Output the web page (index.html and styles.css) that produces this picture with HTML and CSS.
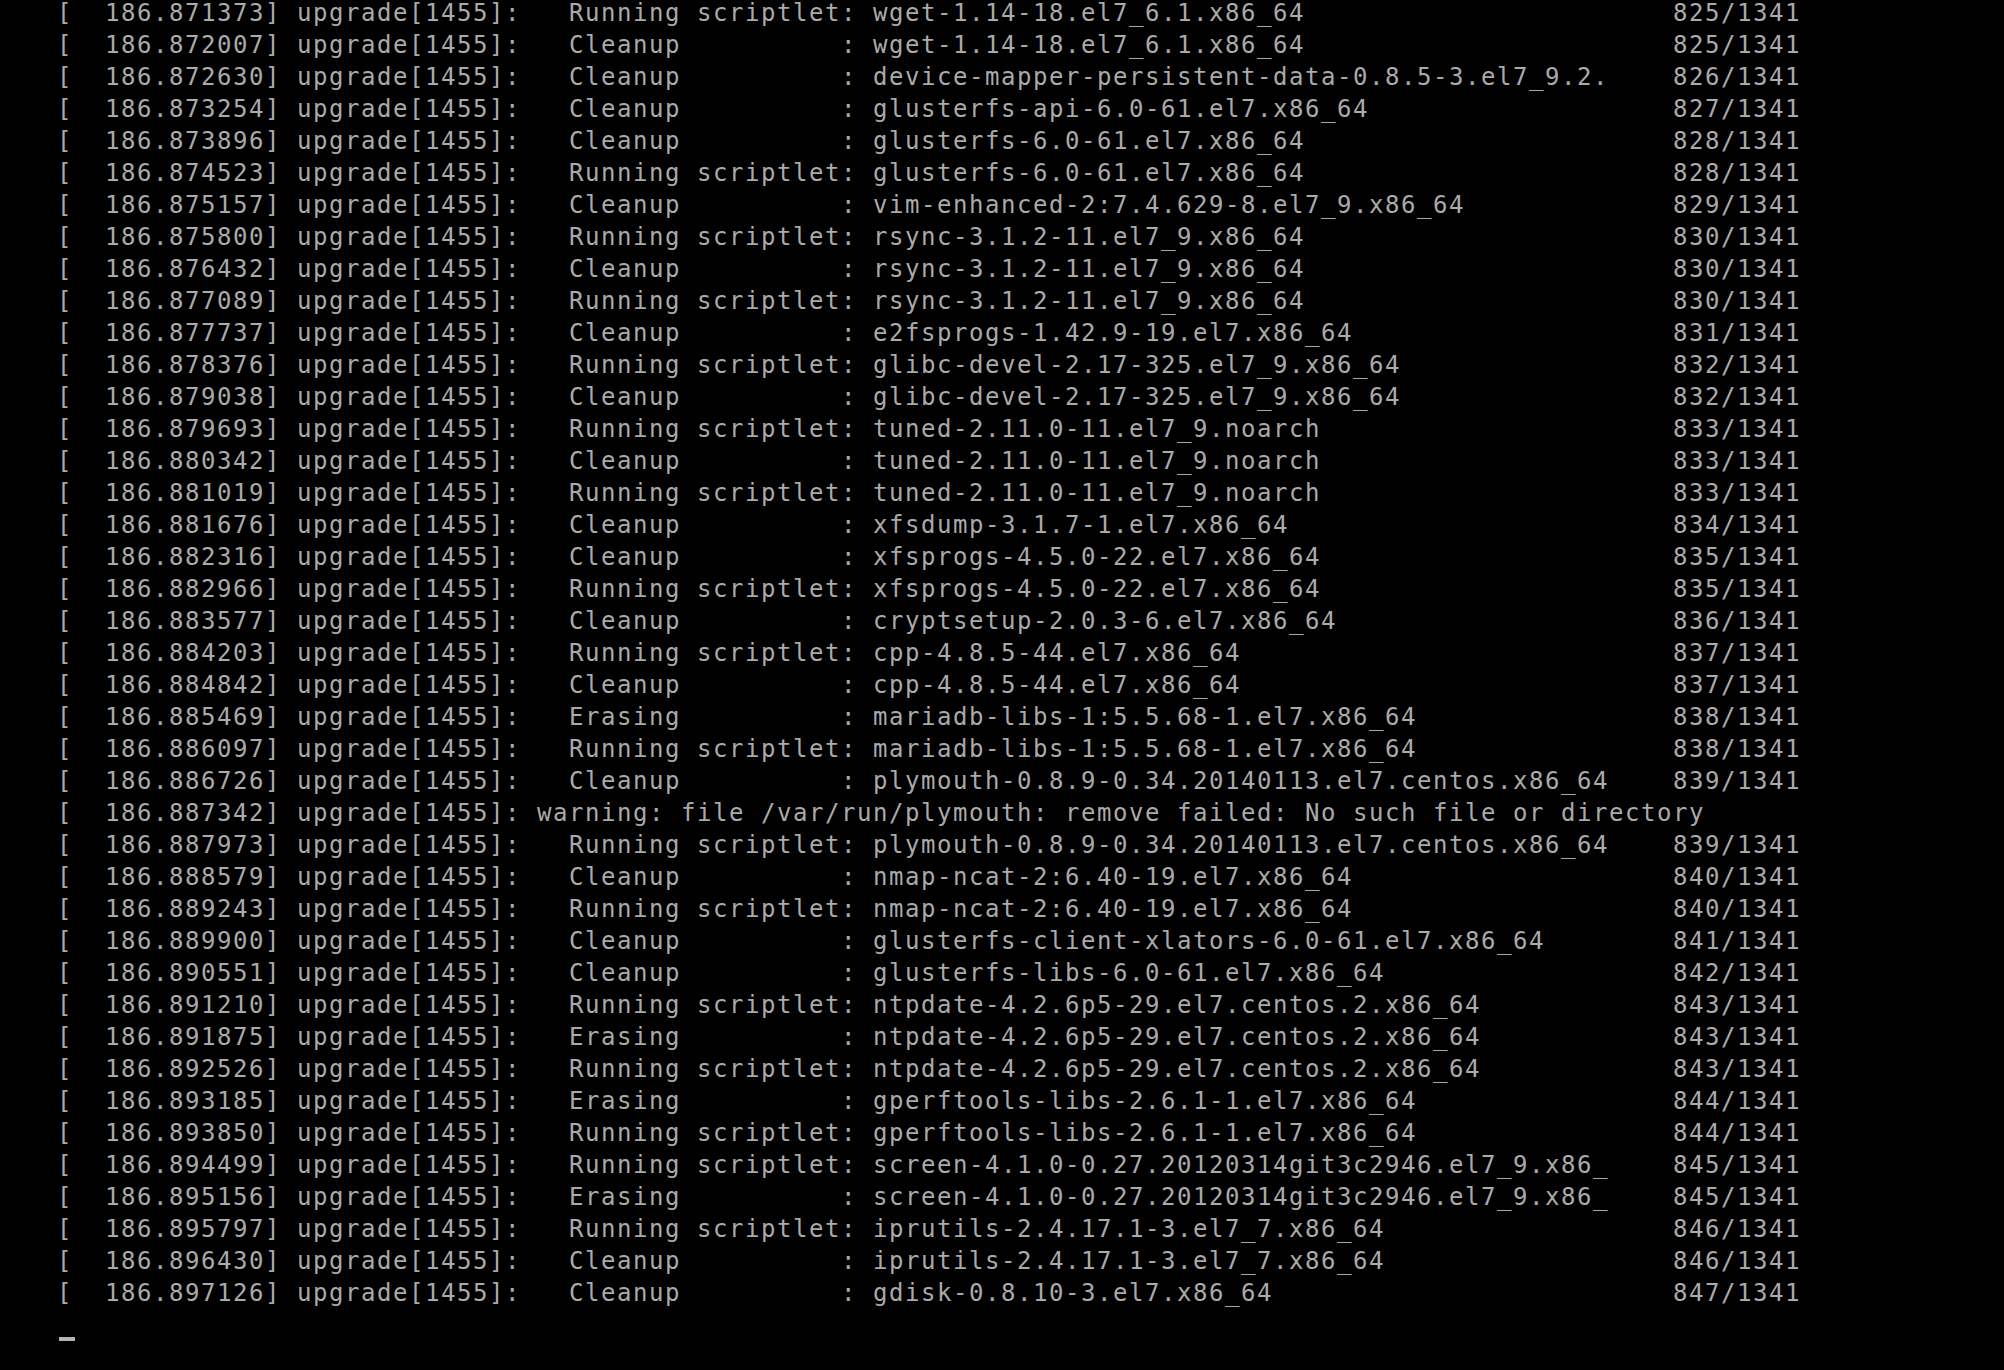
FILE: index.html
```html
<!DOCTYPE html>
<html lang="en">

<head>
    <meta charset="UTF-8">
    <meta name="viewport" content="width=device-width, initial-scale=1.0">
    <title>console</title>
    <link rel="stylesheet" href="styles.css">
</head>

<body>
    <div id="screen">
        <div class="ln"><span class="head">[  186.871373] upgrade[1455]:</span><span class="act">Running scriptlet:</span><span class="pkg">wget-1.14-18.el7_6.1.x86_64</span><span class="cnt">825/1341</span></div>
        <div class="ln"><span class="head">[  186.872007] upgrade[1455]:</span><span class="act">Cleanup          :</span><span class="pkg">wget-1.14-18.el7_6.1.x86_64</span><span class="cnt">825/1341</span></div>
        <div class="ln"><span class="head">[  186.872630] upgrade[1455]:</span><span class="act">Cleanup          :</span><span class="pkg">device-mapper-persistent-data-0.8.5-3.el7_9.2.</span><span class="cnt">826/1341</span></div>
        <div class="ln"><span class="head">[  186.873254] upgrade[1455]:</span><span class="act">Cleanup          :</span><span class="pkg">glusterfs-api-6.0-61.el7.x86_64</span><span class="cnt">827/1341</span></div>
        <div class="ln"><span class="head">[  186.873896] upgrade[1455]:</span><span class="act">Cleanup          :</span><span class="pkg">glusterfs-6.0-61.el7.x86_64</span><span class="cnt">828/1341</span></div>
        <div class="ln"><span class="head">[  186.874523] upgrade[1455]:</span><span class="act">Running scriptlet:</span><span class="pkg">glusterfs-6.0-61.el7.x86_64</span><span class="cnt">828/1341</span></div>
        <div class="ln"><span class="head">[  186.875157] upgrade[1455]:</span><span class="act">Cleanup          :</span><span class="pkg">vim-enhanced-2:7.4.629-8.el7_9.x86_64</span><span class="cnt">829/1341</span></div>
        <div class="ln"><span class="head">[  186.875800] upgrade[1455]:</span><span class="act">Running scriptlet:</span><span class="pkg">rsync-3.1.2-11.el7_9.x86_64</span><span class="cnt">830/1341</span></div>
        <div class="ln"><span class="head">[  186.876432] upgrade[1455]:</span><span class="act">Cleanup          :</span><span class="pkg">rsync-3.1.2-11.el7_9.x86_64</span><span class="cnt">830/1341</span></div>
        <div class="ln"><span class="head">[  186.877089] upgrade[1455]:</span><span class="act">Running scriptlet:</span><span class="pkg">rsync-3.1.2-11.el7_9.x86_64</span><span class="cnt">830/1341</span></div>
        <div class="ln"><span class="head">[  186.877737] upgrade[1455]:</span><span class="act">Cleanup          :</span><span class="pkg">e2fsprogs-1.42.9-19.el7.x86_64</span><span class="cnt">831/1341</span></div>
        <div class="ln"><span class="head">[  186.878376] upgrade[1455]:</span><span class="act">Running scriptlet:</span><span class="pkg">glibc-devel-2.17-325.el7_9.x86_64</span><span class="cnt">832/1341</span></div>
        <div class="ln"><span class="head">[  186.879038] upgrade[1455]:</span><span class="act">Cleanup          :</span><span class="pkg">glibc-devel-2.17-325.el7_9.x86_64</span><span class="cnt">832/1341</span></div>
        <div class="ln"><span class="head">[  186.879693] upgrade[1455]:</span><span class="act">Running scriptlet:</span><span class="pkg">tuned-2.11.0-11.el7_9.noarch</span><span class="cnt">833/1341</span></div>
        <div class="ln"><span class="head">[  186.880342] upgrade[1455]:</span><span class="act">Cleanup          :</span><span class="pkg">tuned-2.11.0-11.el7_9.noarch</span><span class="cnt">833/1341</span></div>
        <div class="ln"><span class="head">[  186.881019] upgrade[1455]:</span><span class="act">Running scriptlet:</span><span class="pkg">tuned-2.11.0-11.el7_9.noarch</span><span class="cnt">833/1341</span></div>
        <div class="ln"><span class="head">[  186.881676] upgrade[1455]:</span><span class="act">Cleanup          :</span><span class="pkg">xfsdump-3.1.7-1.el7.x86_64</span><span class="cnt">834/1341</span></div>
        <div class="ln"><span class="head">[  186.882316] upgrade[1455]:</span><span class="act">Cleanup          :</span><span class="pkg">xfsprogs-4.5.0-22.el7.x86_64</span><span class="cnt">835/1341</span></div>
        <div class="ln"><span class="head">[  186.882966] upgrade[1455]:</span><span class="act">Running scriptlet:</span><span class="pkg">xfsprogs-4.5.0-22.el7.x86_64</span><span class="cnt">835/1341</span></div>
        <div class="ln"><span class="head">[  186.883577] upgrade[1455]:</span><span class="act">Cleanup          :</span><span class="pkg">cryptsetup-2.0.3-6.el7.x86_64</span><span class="cnt">836/1341</span></div>
        <div class="ln"><span class="head">[  186.884203] upgrade[1455]:</span><span class="act">Running scriptlet:</span><span class="pkg">cpp-4.8.5-44.el7.x86_64</span><span class="cnt">837/1341</span></div>
        <div class="ln"><span class="head">[  186.884842] upgrade[1455]:</span><span class="act">Cleanup          :</span><span class="pkg">cpp-4.8.5-44.el7.x86_64</span><span class="cnt">837/1341</span></div>
        <div class="ln"><span class="head">[  186.885469] upgrade[1455]:</span><span class="act">Erasing          :</span><span class="pkg">mariadb-libs-1:5.5.68-1.el7.x86_64</span><span class="cnt">838/1341</span></div>
        <div class="ln"><span class="head">[  186.886097] upgrade[1455]:</span><span class="act">Running scriptlet:</span><span class="pkg">mariadb-libs-1:5.5.68-1.el7.x86_64</span><span class="cnt">838/1341</span></div>
        <div class="ln"><span class="head">[  186.886726] upgrade[1455]:</span><span class="act">Cleanup          :</span><span class="pkg">plymouth-0.8.9-0.34.20140113.el7.centos.x86_64</span><span class="cnt">839/1341</span></div>
        <div class="ln"><span class="head">[  186.887342] upgrade[1455]:</span><span class="msg">warning: file /var/run/plymouth: remove failed: No such file or directory</span></div>
        <div class="ln"><span class="head">[  186.887973] upgrade[1455]:</span><span class="act">Running scriptlet:</span><span class="pkg">plymouth-0.8.9-0.34.20140113.el7.centos.x86_64</span><span class="cnt">839/1341</span></div>
        <div class="ln"><span class="head">[  186.888579] upgrade[1455]:</span><span class="act">Cleanup          :</span><span class="pkg">nmap-ncat-2:6.40-19.el7.x86_64</span><span class="cnt">840/1341</span></div>
        <div class="ln"><span class="head">[  186.889243] upgrade[1455]:</span><span class="act">Running scriptlet:</span><span class="pkg">nmap-ncat-2:6.40-19.el7.x86_64</span><span class="cnt">840/1341</span></div>
        <div class="ln"><span class="head">[  186.889900] upgrade[1455]:</span><span class="act">Cleanup          :</span><span class="pkg">glusterfs-client-xlators-6.0-61.el7.x86_64</span><span class="cnt">841/1341</span></div>
        <div class="ln"><span class="head">[  186.890551] upgrade[1455]:</span><span class="act">Cleanup          :</span><span class="pkg">glusterfs-libs-6.0-61.el7.x86_64</span><span class="cnt">842/1341</span></div>
        <div class="ln"><span class="head">[  186.891210] upgrade[1455]:</span><span class="act">Running scriptlet:</span><span class="pkg">ntpdate-4.2.6p5-29.el7.centos.2.x86_64</span><span class="cnt">843/1341</span></div>
        <div class="ln"><span class="head">[  186.891875] upgrade[1455]:</span><span class="act">Erasing          :</span><span class="pkg">ntpdate-4.2.6p5-29.el7.centos.2.x86_64</span><span class="cnt">843/1341</span></div>
        <div class="ln"><span class="head">[  186.892526] upgrade[1455]:</span><span class="act">Running scriptlet:</span><span class="pkg">ntpdate-4.2.6p5-29.el7.centos.2.x86_64</span><span class="cnt">843/1341</span></div>
        <div class="ln"><span class="head">[  186.893185] upgrade[1455]:</span><span class="act">Erasing          :</span><span class="pkg">gperftools-libs-2.6.1-1.el7.x86_64</span><span class="cnt">844/1341</span></div>
        <div class="ln"><span class="head">[  186.893850] upgrade[1455]:</span><span class="act">Running scriptlet:</span><span class="pkg">gperftools-libs-2.6.1-1.el7.x86_64</span><span class="cnt">844/1341</span></div>
        <div class="ln"><span class="head">[  186.894499] upgrade[1455]:</span><span class="act">Running scriptlet:</span><span class="pkg">screen-4.1.0-0.27.20120314git3c2946.el7_9.x86_</span><span class="cnt">845/1341</span></div>
        <div class="ln"><span class="head">[  186.895156] upgrade[1455]:</span><span class="act">Erasing          :</span><span class="pkg">screen-4.1.0-0.27.20120314git3c2946.el7_9.x86_</span><span class="cnt">845/1341</span></div>
        <div class="ln"><span class="head">[  186.895797] upgrade[1455]:</span><span class="act">Running scriptlet:</span><span class="pkg">iprutils-2.4.17.1-3.el7_7.x86_64</span><span class="cnt">846/1341</span></div>
        <div class="ln"><span class="head">[  186.896430] upgrade[1455]:</span><span class="act">Cleanup          :</span><span class="pkg">iprutils-2.4.17.1-3.el7_7.x86_64</span><span class="cnt">846/1341</span></div>
        <div class="ln"><span class="head">[  186.897126] upgrade[1455]:</span><span class="act">Cleanup          :</span><span class="pkg">gdisk-0.8.10-3.el7.x86_64</span><span class="cnt">847/1341</span></div>
        <div class="ln"><div class="cursor"></div></div>
    </div>
</body>

</html>
```

FILE: styles.css
```css
* {
    margin: 0;
    padding: 0;
    box-sizing: border-box;
}

body {
    background: #000;
    overflow: hidden;
}

/* 16x32 character cells, like the text console */
#screen {
    margin-top: -3px;
    padding-left: 57px;
    font-family: "DejaVu Sans Mono", monospace;
    font-size: 24px;
    letter-spacing: 1.55px;
    line-height: 32px;
    color: #aaaaaa;
}

.ln {
    display: flex;
    height: 32px;
    white-space: pre;
}

.head {
    width: 480px;
    flex: none;
}

.act {
    width: 336px;
    padding-left: 32px;
    flex: none;
}

.pkg {
    width: 800px;
    flex: none;
}

.cursor {
    width: 16px;
    height: 4px;
    margin-top: 28px;
    margin-left: 2px;
    background: #b4b4b4;
}
```
